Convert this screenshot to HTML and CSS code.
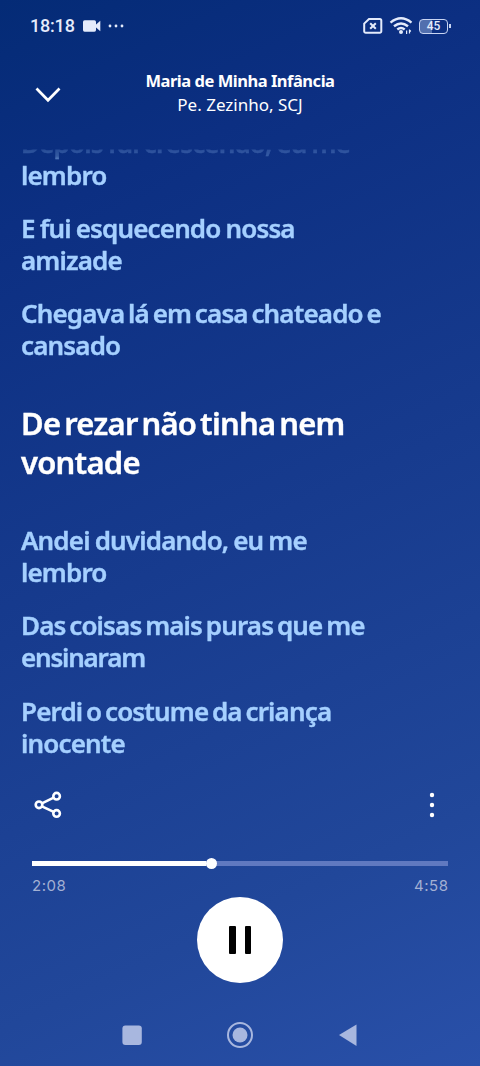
FILE: index.html
```html
<!DOCTYPE html>
<html lang="pt-BR">
<head>
<meta charset="utf-8">
<title>Maria de Minha Infância</title>
<link rel="stylesheet" href="styles.css">
</head>
<body>
<div class="screen">
  <div class="status">
    <span class="clock">18:18</span>
    <svg class="cam" width="20" height="14" viewBox="0 0 20 14"><rect x="1" y="1.300" width="13" height="11.400" rx="1.600"/><path d="M13.500 6l4.800-4.200v10.400l-4.800-4.200z"/></svg>
    <svg class="dots" width="16" height="4" viewBox="0 0 16 4"><circle cx="2" cy="2" r="1.400"/><circle cx="8" cy="2" r="1.400"/><circle cx="14" cy="2" r="1.400"/></svg>
    <svg class="sim" width="22" height="18" viewBox="0 0 22 18"><path d="M7 2h10.800a1.500 1.500 0 0 1 1.500 1.500v10.700a1.500 1.500 0 0 1-1.500 1.500H3.700a1.500 1.500 0 0 1-1.500-1.500V6.600z"/><path d="M8.200 6.200l5.600 5.600M13.800 6.200l-5.600 5.600"/></svg>
    <svg class="wifi" width="24" height="18" viewBox="0 0 24 18"><path d="M1.500 5.600Q12-3 22.500 5.600M5 9.300Q12 3.600 19 9.300M8.300 12.500Q12 9.600 15.700 12.500"/><circle cx="12" cy="15" r="2"/><path class="thin" d="M17.600 13.500v3.500M20.500 12.500v4M20.500 13l1.300 1.500"/></svg>
    <div class="battery"><span class="level">45</span></div>
  </div>

  <header class="header">
    <svg class="chevron" width="28" height="18" viewBox="0 0 28 18"><path d="M2.500 2.500L14 14.200 25.500 2.500"/></svg>
    <div class="titles">
      <div class="song">Maria de Minha Infância</div>
      <div class="artist">Pe. Zezinho, SCJ</div>
    </div>
  </header>

  <main class="lyrics">
    <p><span class="normal">Depois fui crescendo, eu me</span><span>lembro</span></p>
    <p><span class="normal">E fui esquecendo nossa</span><span>amizade</span></p>
    <p><span class="tight">Chegava lá em casa chateado e</span><span>cansado</span></p>
    <p class="active"><span>De rezar não tinha nem</span><span>vontade</span></p>
    <p><span class="normal">Andei duvidando, eu me</span><span>lembro</span></p>
    <p><span class="tight">Das coisas mais puras que me</span><span class="narrow">ensinaram</span></p>
    <p><span class="tight">Perdi o costume da criança</span><span>inocente</span></p>
  </main>

  <footer class="player">
    <div class="actions">
      <svg class="share" width="30" height="30" viewBox="0 0 30 30"><circle cx="7" cy="14.800" r="3.300"/><circle cx="24.600" cy="6.200" r="3.300"/><circle cx="24.600" cy="23.400" r="3.300"/><path d="M9.900 13.300L21.700 7.700M9.900 16.300L21.700 21.900"/></svg>
      <svg class="more" width="6" height="26" viewBox="0 0 6 26"><circle cx="3" cy="3" r="2.200"/><circle cx="3" cy="13" r="2.200"/><circle cx="3" cy="23" r="2.200"/></svg>
    </div>
    <div class="track"><div class="played"></div><div class="thumb"></div></div>
    <div class="times"><span>2:08</span><span>4:58</span></div>
    <div class="pause"><i></i><i></i></div>
  </footer>

  <nav class="nav">
    <svg width="28" height="28" viewBox="0 0 28 28"><rect x="4.400" y="4.600" width="19.400" height="19.400" rx="3"/></svg>
    <svg width="28" height="28" viewBox="0 0 28 28"><circle class="ring" cx="14" cy="14" r="12"/><circle cx="14" cy="14" r="7.500"/></svg>
    <svg width="28" height="28" viewBox="0 0 28 28"><path d="M5 14L22.500 3.600v21.400z"/></svg>
  </nav>
</div>
</body>
</html>
```
FILE: styles.css
```css
* { box-sizing: border-box; }
body { margin: 0; font-family: "Noto Sans", "Open Sans", sans-serif; color: #fff; }
.screen {
  width: 480px; height: 1066px; overflow: hidden;
  display: flex; flex-direction: column;
  background: linear-gradient(155deg, #042b76 0%, #0c2f82 18%, #173b8e 50%, #21479a 80%, #2950a9 100%);
}
svg { display: block; flex: none; }

.status { height: 52px; padding: 0 28px 0 30px; display: flex; align-items: center; color: #e4ebfb; fill: #e4ebfb; }
.clock { font: 500 18px/20px Roboto, sans-serif; width: 45px; letter-spacing: -0.200px; white-space: nowrap; }
.cam { margin-left: 7px; }
.dots { margin-left: 6px; }
.sim { margin-left: auto; fill: none; stroke: #e4ebfb; stroke-width: 2; }
.wifi { margin-left: 5px; fill: none; stroke: #e4ebfb; stroke-width: 2.400; }
.wifi circle { fill: #e4ebfb; stroke: none; }
.wifi .thin { stroke-width: 1.200; }
.battery {
  position: relative; width: 29px; height: 15px; margin: 0 4px 0 6px;
  border: 1.500px solid #c8d4f2; border-radius: 4px;
  background: linear-gradient(90deg, #526fae 45%, transparent 45%);
  display: flex; align-items: center; justify-content: center;
}
.battery::after { content: ""; position: absolute; right: -4px; top: 4px; width: 2px; height: 4px; background: #c8d4f2; }
.level { font: 500 12px/13px Roboto, sans-serif; }

.header { height: 96px; display: flex; justify-content: center; position: relative; padding-top: 17px; }
.chevron { position: absolute; left: 34px; top: 34px; fill: none; stroke: #fff; stroke-width: 2.700; }
.titles { text-align: center; line-height: 24px; font-size: 17px; white-space: nowrap; }
.song { font-weight: 700; font-size: 16.500px; letter-spacing: -0.480px; }
.artist { font-weight: 400; }

.lyrics {
  height: 629px; overflow: hidden; padding-left: 21px;
  -webkit-mask-image: linear-gradient(#0000 1px, #0003 2px, #0004 8px, #000 19px);
  mask-image: linear-gradient(#0000 1px, #0003 2px, #0004 8px, #000 19px);
}
.lyrics p { margin: 0 0 21.300px; font-size: 26px; line-height: 32px; font-weight: 600; color: #a5d0ff; -webkit-text-stroke: 0.400px currentColor; }
.lyrics p:first-child { margin-top: -21.200px; }
.lyrics span { display: block; white-space: nowrap; letter-spacing: -0.850px; }
.lyrics .normal { word-spacing: -0.900px; }
.lyrics .tight { word-spacing: -2.200px; }
.lyrics .narrow { letter-spacing: -1.200px; }
.lyrics .active { margin: 42.600px 0; font-size: 31px; line-height: 38.700px; color: #fff; }
.lyrics .active span { letter-spacing: -0.750px; word-spacing: -3.500px; }

.player { height: 225px; padding: 13px 32px 0; display: flex; flex-direction: column; }
.actions { height: 30px; display: flex; justify-content: space-between; align-items: center; padding-right: 13px; }
.share { fill: none; stroke: #fff; stroke-width: 2.600; }
.more { fill: #fff; }
.track { margin-top: 41px; height: 5px; background: #6079c0; display: flex; align-items: center; flex: none; }
.played { width: 174px; height: 5px; background: #fff; }
.thumb { width: 11px; height: 11px; border-radius: 50%; background: #fff; }
.times { display: flex; justify-content: space-between; font: 400 15px/20px Inter, sans-serif; letter-spacing: 0.500px; color: #a3b0d3; margin: 10px -0.500px 0 0; }
.pause {
  align-self: center; width: 86px; height: 86px; flex: none; margin-top: 1px; border-radius: 50%;
  background: #fff; display: flex; align-items: center; justify-content: center; gap: 9px;
}
.pause i { width: 6.500px; height: 28px; border-radius: 1px; background: #000; }

.nav { height: 64px; padding-top: 1px; display: flex; justify-content: center; align-items: center; gap: 80px; fill: #a8b7df; }
.ring { fill: none; stroke: #a8b7df; stroke-width: 2; }
```
